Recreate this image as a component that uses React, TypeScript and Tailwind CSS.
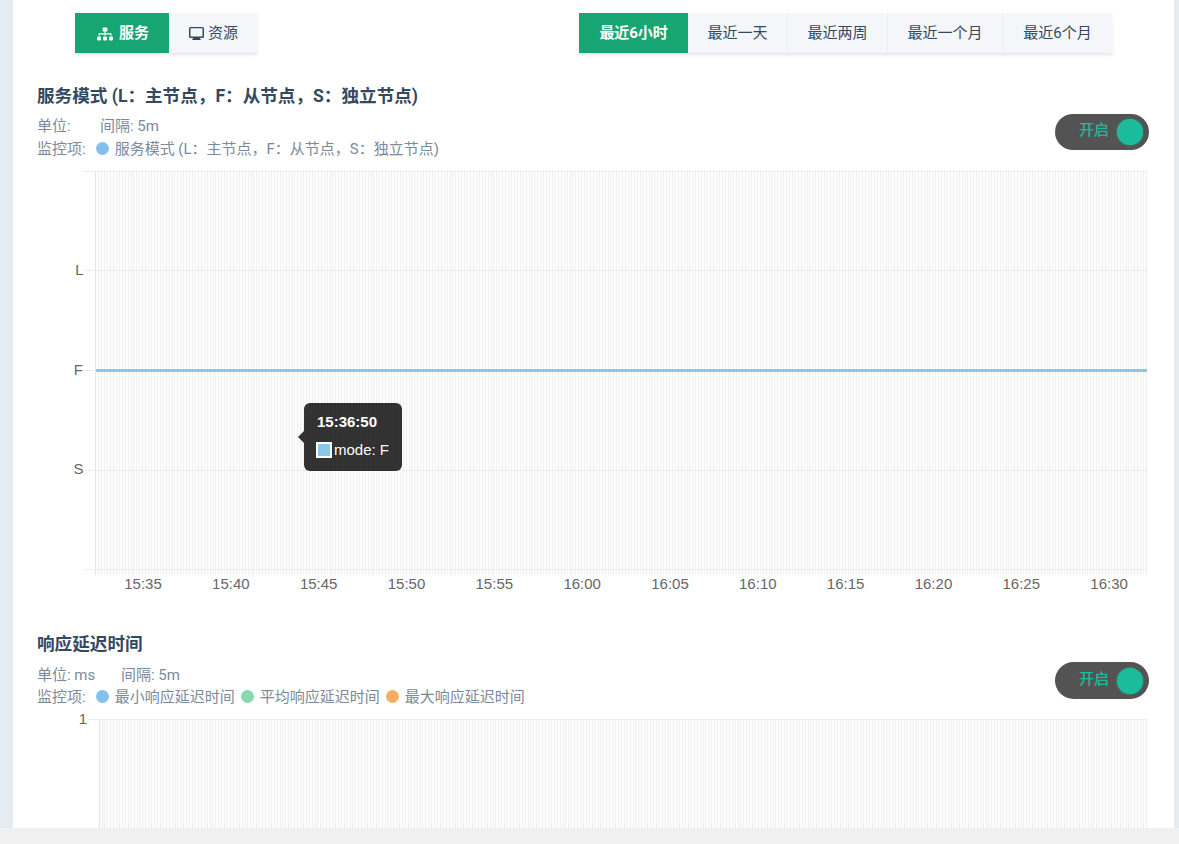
import React from "react";
import { FaSitemap } from "react-icons/fa";

const ranges = ["最近一天", "最近两周", "最近一个月", "最近6个月"];
const widths = ["w-[100px]", "w-[100px]", "w-[115px]", "w-[109px]"];

function Toggle({ height = "h-9" }: { height?: string }) {
  return (
    <div className={"flex w-[94px] shrink-0 items-center justify-between rounded-full bg-[#535353] pl-6 pr-[6px] " + height}>
      <span className="-mt-1 text-[15px] leading-5 font-medium text-[#1abc9c]">开启</span>
      <span className="size-[26px] rounded-full bg-[#1abc9c] shadow-[0_0_2px_#1abc9c]" />
    </div>
  );
}

function Legend({ color, children }: { color: string; children: string }) {
  return (
    <span className="flex items-center gap-[6px]">
      <span className={"-mt-[2px] size-[13px] rounded-full " + color} />
      {children}
    </span>
  );
}

function Bars({ x0, x1, y0, y1 }: { x0: number; x1: number; y0: number; y1: number }) {
  const count = 359;
  const left = Math.floor(x0);
  return (
    <g shapeRendering="crispEdges">
      <rect x={left} y={y0} width={Math.floor(x1) - left} height={y1 - y0} fill="#fdfdfd" />
      {Array.from({ length: count + 1 }, (_, i) => (
        <rect key={i} x={Math.floor(x0 + ((x1 - x0) * i) / count)} y={y0} width="1" height={y1 - y0} fill={i ? "#f0f0f0" : "#e4e4e4"} />
      ))}
    </g>
  );
}

const times = ["15:35", "15:40", "15:45", "15:50", "15:55", "16:00", "16:05", "16:10", "16:15", "16:20", "16:25", "16:30"];

export default function App() {
  return (
    <div className="h-[844px] overflow-hidden bg-[#f0f0f0] font-['Roboto','Noto_Sans_CJK_SC',sans-serif] text-[15px] text-[#34495e]">
      <div className="h-[828px] overflow-hidden bg-[#e4ebf1] pr-[5px] pl-[13px]">
        <main className="h-full bg-white pt-[13px]">
          <nav className="flex h-10 pl-[62px]">
            <div className="flex shadow-[0_2px_3px_rgba(0,0,0,0.1)]">
              <div className="flex w-[94px] items-center gap-[6px] bg-[#17a673] pl-[22px] font-bold text-white">
                <FaSitemap className="mt-[2px] size-[16px] shrink-0" />
                <span>服务</span>
              </div>
              <div className="flex w-[88px] items-center gap-[4px] bg-[#f5f6fa] pl-[20px]">
                <svg className="size-[15px]" viewBox="0 0 15 15" fill="currentColor">
                  <path fillRule="evenodd" d="M1.500 1h12q1.500 0 1.500 1.500v8q0 1.500-1.500 1.500h-2.500v1q1 0 1 1h-9q0-1 1-1v-1h-2.500q-1.500 0-1.500-1.500v-8q0-1.500 1.500-1.500m0 1.200v8.300h12v-8.300z" />
                </svg>
                <span>资源</span>
              </div>
            </div>
            <div className="ml-[322px] flex shadow-[0_2px_3px_rgba(0,0,0,0.1)]">
              <div className="flex w-[109px] items-center justify-center bg-[#17a673] font-bold tracking-[-0.1px] text-white">最近6小时</div>
              {ranges.map((r, i) => (
                <div key={r} className={"flex items-center justify-center bg-[#f5f6fa] " + widths[i] + (i < 3 ? " border-r border-[#eceef2]" : "")}>{r}</div>
              ))}
            </div>
          </nav>

          <section className="h-[548px] pt-[32px]">
            <div className="flex h-[84px] justify-between pr-[25px] pl-[24px]">
              <div>
                <h2 className="h-[30px] text-[17.6px] leading-[22px] font-bold">服务模式 (L：主节点，F：从节点，S：独立节点)</h2>
                <div className="flex h-[22px] items-center text-[#7b8a9a]"><span className="w-[63px]">单位:</span><span>间隔: 5m</span></div>
                <div className="flex h-[24px] items-center gap-[10px] text-[#7b8a9a]"><span>监控项:</span><Legend color="bg-[#82c1ed]">服务模式 (L：主节点，F：从节点，S：独立节点)</Legend></div>
              </div>
              <div className="pt-[29px]"><Toggle /></div>
            </div>
            <div className="relative h-[430px] w-full">
              <svg className="block" width="1161" height="430" viewBox="13 169 1161 430" fontFamily="Liberation Sans, Arial, sans-serif">
                <Bars x0={95.95} x1={1146.5} y0={171} y1={575} />
                <g shapeRendering="crispEdges" fill="#ececec">
                  {[171, 270, 370, 470, 569].map((y) => <rect key={y} x="84" y={y} width="1063" height="1" />)}
                </g>
                <path d="M96 370.500H1147" stroke="#87c9e7" strokeWidth="3" />
                <g fill="#666" fontSize="15">
                  <text x="83.500" y="275" textAnchor="end">L</text>
                  <text x="83" y="375" textAnchor="end">F</text>
                  <text x="83.500" y="474" textAnchor="end">S</text>
                  {times.map((t, i) => <text key={t} x={143 + i * 87.83} y="589" textAnchor="middle">{t}</text>)}
                </g>
              </svg>
              <div className="absolute top-[234px] left-[291px] h-[68px] w-[98px] rounded-md bg-black/80 font-['Liberation_Sans',sans-serif] text-white">
                <span className="absolute top-[28px] -left-[6px] border-y-6 border-r-6 border-y-transparent border-r-black/80" />
                <div className="pt-[9px] pl-[13px] leading-[20px] font-bold">15:36:50</div>
                <div className="mt-[8px] flex items-center gap-[2px] pl-[12px] leading-5"><span className="size-[16px] border-2 border-white bg-[#87c9e7]" />mode: F</div>
              </div>
            </div>
          </section>

          <section className="pt-[32px]">
            <div className="flex h-[84px] justify-between pr-[25px] pl-[24px]">
              <div>
                <h2 className="h-[31px] text-[17.6px] leading-[22px] font-bold">响应延迟时间</h2>
                <div className="flex h-[22px] items-center text-[#7b8a9a]"><span className="w-[84px]">单位: ms</span><span>间隔: 5m</span></div>
                <div className="flex h-[22px] items-center gap-[10px] text-[#7b8a9a]">
                  <span>监控项:</span>
                  <div className="flex gap-[6px]">
                    <Legend color="bg-[#82c1ed]">最小响应延迟时间</Legend>
                    <Legend color="bg-[#88d8b0]">平均响应延迟时间</Legend>
                    <Legend color="bg-[#f6b060]">最大响应延迟时间</Legend>
                  </div>
                </div>
              </div>
              <div className="pt-[29px]"><Toggle height="h-[37px]" /></div>
            </div>
            <svg className="-mt-[10px] block" width="1161" height="121" viewBox="13 707 1161 121" fontFamily="Liberation Sans, Arial, sans-serif">
              <Bars x0={99.15} x1={1146.500} y0={719} y1={828} />
              <rect x="88" y="719" width="1059" height="1" fill="#ececec" />
              <text x="87" y="724" textAnchor="end" fontSize="15" fill="#666">1</text>
            </svg>
          </section>
        </main>
      </div>
    </div>
  );
}
